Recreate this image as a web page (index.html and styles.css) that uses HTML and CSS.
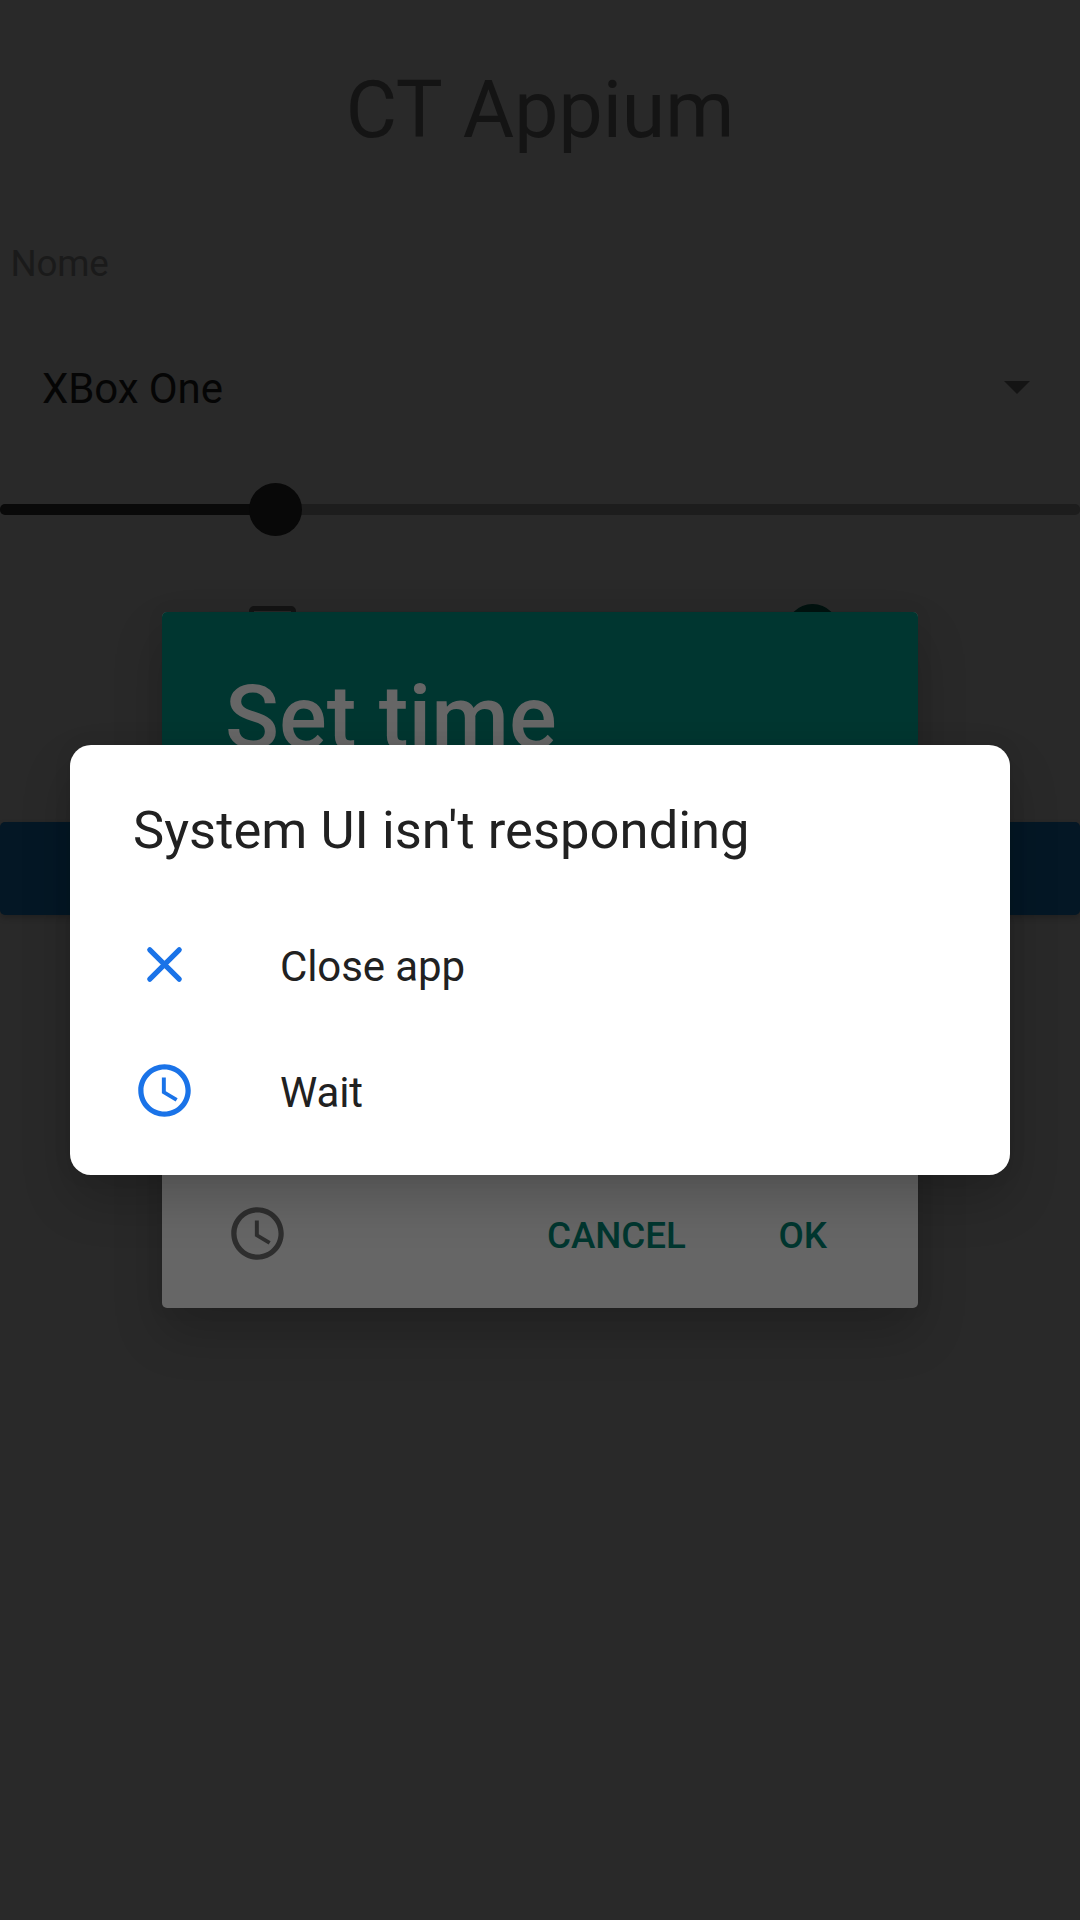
FILE: index.html
```html
<!DOCTYPE html>
<html lang="en">
<head>
<meta charset="utf-8">
<title>CT Appium</title>
<link rel="stylesheet" href="styles.css">
</head>
<body>
<main class="screen">
  <h1 class="title">CT Appium</h1>
  <div class="field">Nome</div>
  <div class="spinner"><span>XBox One</span><svg class="caret" viewBox="0 0 26 13"><path d="M0 0h26L13 13z"/></svg></div>
  <div class="slider"><div class="played"></div><div class="knob"></div><div class="rest"></div></div>
  <div class="toggles">
    <div class="cell"><div class="checkbox"></div></div>
    <div class="cell"><div class="switch"></div></div>
  </div>
  <div class="save"></div>

  <section class="picker">
    <header class="picker-head">Set time</header>
    <footer class="picker-foot">
      <svg class="icon" viewBox="0 0 24 24"><path d="M11.99 2C6.47 2 2 6.48 2 12s4.47 10 9.99 10C17.52 22 22 17.52 22 12S17.52 2 11.99 2zM12 20c-4.42 0-8-3.58-8-8s3.58-8 8-8 8 3.58 8 8-3.58 8-8 8zM12.5 7H11v6l5.25 3.15.75-1.23-4.5-2.67z"/></svg>
      <span class="cancel">CANCEL</span>
      <span class="ok">OK</span>
    </footer>
  </section>

  <section class="alert">
    <h2 class="alert-title">System UI isn't responding</h2>
    <div class="action">
      <svg class="icon" viewBox="0 0 24 24"><path class="cross" d="M6.4 6.4 17.6 17.6M17.6 6.4 6.4 17.6"/></svg>
      <span>Close app</span>
    </div>
    <div class="action">
      <svg class="icon" viewBox="0 0 24 24"><path d="M11.99 2C6.47 2 2 6.48 2 12s4.47 10 9.99 10C17.52 22 22 17.52 22 12S17.52 2 11.99 2zM12 20c-4.42 0-8-3.58-8-8s3.58-8 8-8 8 3.58 8 8-3.58 8-8 8zM12.5 7H11v6l5.25 3.15.75-1.23-4.5-2.67z"/></svg>
      <span>Wait</span>
    </div>
  </section>
</main>
</body>
</html>
```
FILE: styles.css
```css
* { box-sizing: border-box; }
body { margin: 0; background: #292929; font-family: Roboto, sans-serif; }
.screen { position: relative; width: 1080px; height: 1920px; overflow: hidden; background: #292929; }
.title { margin: 0; height: 221px; line-height: 221px; text-align: center; font-size: 78.75px; font-weight: 400; word-spacing: 2px; color: #141414; }
.field { height: 85px; line-height: 85px; padding-left: 10.5px; font-size: 36.75px; letter-spacing: -0.2px; color: #1a1a1a; }
.spinner { height: 165px; display: flex; align-items: center; justify-content: space-between; padding: 0 50px 0 42px; font-size: 42px; letter-spacing: -0.1px; color: #050505; }
.caret { width: 26px; height: 13px; margin-bottom: 2px; fill: #141414; }
.slider { height: 77px; display: flex; align-items: center; }
.played { width: 255px; height: 11px; border-radius: 5px 0 0 5px; background: #090909; }
.knob { width: 53px; height: 53px; margin: 0 -6px; border-radius: 50%; background: #080808; z-index: 1; }
.rest { flex: 1; height: 11px; border-radius: 0 5px 5px 0; background: #1d1d1d; }
.toggles { height: 164px; display: flex; align-items: center; }
.cell { flex: 1; display: flex; justify-content: center; }
.checkbox { width: 47px; height: 47px; border: 5px solid #141414; border-radius: 5px; margin: 0 0 1px 5px; }
.switch { width: 53px; height: 53px; border-radius: 50%; background: #001310; margin-left: 4px; }
.save { margin-top: 110px; height: 93px; border-radius: 5px; background: #041725; box-shadow: 0 3px 6px rgba(0,0,0,.2); }
.picker { position: absolute; left: 162px; top: 612px; width: 756px; height: 696px; border-radius: 5px; background: #666; display: flex; flex-direction: column; justify-content: space-between; box-shadow: 0 25px 50px rgba(0,0,0,.19), 0 0 18px rgba(0,0,0,.06); }
.picker-head { height: 211px; line-height: 211px; padding-left: 63px; border-radius: 5px 5px 0 0; background: #003630; color: #666; font-size: 89.25px; font-weight: 500; }
.picker-foot { height: 149px; display: flex; align-items: center; padding: 0 91px 0 63.5px; font-size: 36.75px; font-weight: 500; color: #00362f; }
.picker-foot .icon { fill: #2e2e2e; }
.cancel { margin-left: auto; padding-top: 4px; }
.ok { margin-left: 92.5px; padding-top: 4px; }
.icon { width: 63px; height: 63px; flex: none; }
.alert { position: absolute; left: 70px; top: 745px; width: 940px; height: 430px; border-radius: 21px; background: #fff; padding: 35px 63px 0; color: #212121; box-shadow: 0 25px 50px rgba(0,0,0,.19), 0 0 18px rgba(0,0,0,.08); }
.alert-title { margin: 0 0 21px; height: 100px; line-height: 100px; font-size: 52.5px; font-weight: 400; letter-spacing: 0.04px; }
.action { height: 126px; display: flex; align-items: center; gap: 84px; font-size: 42px; letter-spacing: -0.1px; }
.action span { padding-top: 4px; }
.action .icon { fill: #1a73e8; }
.icon .cross { fill: none; stroke: #1a73e8; stroke-width: 2; stroke-linecap: round; }
```
